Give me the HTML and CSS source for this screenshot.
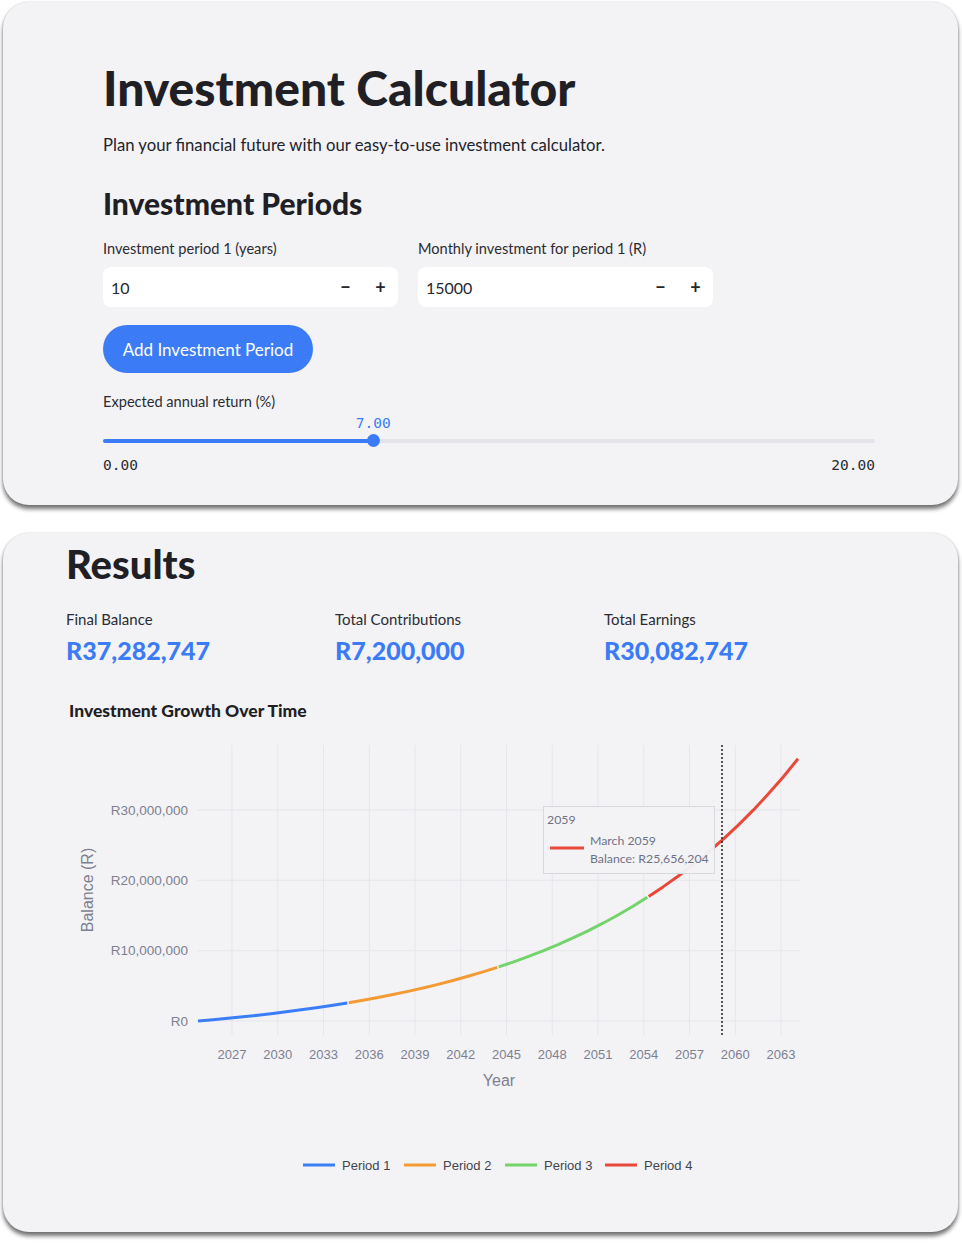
FILE: index.html
```html
<!DOCTYPE html>
<html lang="en">
<head>
<meta charset="utf-8">
<title>Investment Calculator</title>
<link rel="stylesheet" href="styles.css">
</head>
<body>
<section class="card card-input">
  <h1 class="title">Investment Calculator</h1>
  <p class="subtitle">Plan your financial future with our easy-to-use investment calculator.</p>
  <h2 class="section-title">Investment Periods</h2>
  <div class="fields">
    <div class="field">
      <div class="field-label">Investment period 1 (years)</div>
      <div class="number-input">
        <span class="number-value">10</span>
        <span class="step">&#8722;</span>
        <span class="step">+</span>
      </div>
    </div>
    <div class="field">
      <div class="field-label">Monthly investment for period 1 (R)</div>
      <div class="number-input">
        <span class="number-value">15000</span>
        <span class="step">&#8722;</span>
        <span class="step">+</span>
      </div>
    </div>
  </div>
  <button class="add-btn" type="button">Add Investment Period</button>
  <div class="slider-block">
    <div class="field-label">Expected annual return (%)</div>
    <div class="slider-value-row"><span class="slider-value" style="left: 35%">7.00</span></div>
    <div class="slider-track">
      <div class="slider-fill" style="width: 35%"></div>
      <div class="slider-thumb" style="left: 35%"></div>
    </div>
    <div class="slider-range"><span>0.00</span><span>20.00</span></div>
  </div>
</section>

<section class="card card-results">
  <h2 class="results-title">Results</h2>
  <div class="metrics">
    <div class="metric">
      <div class="metric-label">Final Balance</div>
      <div class="metric-value">R37,282,747</div>
    </div>
    <div class="metric">
      <div class="metric-label">Total Contributions</div>
      <div class="metric-value">R7,200,000</div>
    </div>
    <div class="metric">
      <div class="metric-label">Total Earnings</div>
      <div class="metric-value">R30,082,747</div>
    </div>
  </div>
  <h3 class="chart-title">Investment Growth Over Time</h3>
  <svg class="chart" width="880" height="460" viewBox="0 0 880 460">
    <g transform="translate(-66,-730)">
      <g class="grid">
        <line x1="232" y1="745" x2="232" y2="1035"/>
        <line x1="277.75" y1="745" x2="277.75" y2="1035"/>
        <line x1="323.5" y1="745" x2="323.5" y2="1035"/>
        <line x1="369.25" y1="745" x2="369.25" y2="1035"/>
        <line x1="415" y1="745" x2="415" y2="1035"/>
        <line x1="460.75" y1="745" x2="460.75" y2="1035"/>
        <line x1="506.5" y1="745" x2="506.5" y2="1035"/>
        <line x1="552.25" y1="745" x2="552.25" y2="1035"/>
        <line x1="598" y1="745" x2="598" y2="1035"/>
        <line x1="643.75" y1="745" x2="643.75" y2="1035"/>
        <line x1="689.5" y1="745" x2="689.5" y2="1035"/>
        <line x1="735.25" y1="745" x2="735.25" y2="1035"/>
        <line x1="781" y1="745" x2="781" y2="1035"/>
        <line x1="197" y1="810" x2="800" y2="810"/>
        <line x1="197" y1="880.3" x2="800" y2="880.3"/>
        <line x1="197" y1="950.7" x2="800" y2="950.7"/>
        <line x1="197" y1="1021" x2="800" y2="1021"/>
      </g>
      <g class="ytick">
        <text x="188" y="815">R30,000,000</text>
        <text x="188" y="885">R20,000,000</text>
        <text x="188" y="955">R10,000,000</text>
        <text x="188" y="1026">R0</text>
      </g>
      <g class="xtick">
        <text x="232" y="1059">2027</text>
        <text x="277.75" y="1059">2030</text>
        <text x="323.5" y="1059">2033</text>
        <text x="369.25" y="1059">2036</text>
        <text x="415" y="1059">2039</text>
        <text x="460.75" y="1059">2042</text>
        <text x="506.5" y="1059">2045</text>
        <text x="552.25" y="1059">2048</text>
        <text x="598" y="1059">2051</text>
        <text x="643.75" y="1059">2054</text>
        <text x="689.5" y="1059">2057</text>
        <text x="735.25" y="1059">2060</text>
        <text x="781" y="1059">2063</text>
      </g>
      <text class="axis-title" x="499" y="1086">Year</text>
      <text class="axis-title" x="0" y="0" transform="translate(93,890) rotate(-90)">Balance (R)</text>
      <g class="curve">
        <polyline class="p1" points="198,1021 213,1019.7 228,1018.3 243,1016.8 258,1015.2 273,1013.4 288,1011.6 303,1009.6 318,1007.5 333,1005.3 347.3,1003"/>
        <polyline class="p2" points="348.7,1002.7 363,1000.3 378,997.5 393,994.5 408,991.4 423,988.0 438,984.4 453,980.5 468,976.3 483,971.9 497.3,967.4"/>
        <polyline class="p3" points="498.7,966.9 513,962.1 528,956.6 543,950.8 558,944.6 573,937.9 588,930.8 603,923.2 618,915.0 633,906.3 647.3,897.3"/>
        <polyline class="p4" points="648.7,896.5 663,886.9 678,876.2 693,864.8 708,852.5 723,839.4 738,825.4 753,810.4 768,794.3 783,777.2 798,758.8"/>
      </g>
      <line class="spike" x1="722" y1="745" x2="722" y2="1035"/>
      <g class="tooltip">
        <rect x="543.5" y="806.5" width="171" height="67"/>
        <text class="tt-year" x="547" y="824">2059</text>
        <line x1="550" y1="848" x2="584" y2="848"/>
        <text class="tt-text" x="590" y="845">March 2059</text>
        <text class="tt-text" x="590" y="863">Balance: R25,656,204</text>
      </g>
      <g class="legend">
        <line class="p1" x1="303" y1="1165" x2="335" y2="1165"/>
        <text x="342" y="1170">Period 1</text>
        <line class="p2" x1="404" y1="1165" x2="436" y2="1165"/>
        <text x="443" y="1170">Period 2</text>
        <line class="p3" x1="505" y1="1165" x2="537" y2="1165"/>
        <text x="544" y="1170">Period 3</text>
        <line class="p4" x1="605" y1="1165" x2="637" y2="1165"/>
        <text x="644" y="1170">Period 4</text>
      </g>
    </g>
  </svg>
</section>
</body>
</html>
```

FILE: styles.css
```css
* { box-sizing: border-box; }

body {
  margin: 0;
  padding: 2px 4px 12px 3px;
  background: #ffffff;
  font-family: Lato, "Noto Sans", "Open Sans", sans-serif;
  color: #24242b;
}

.card {
  background: #f3f3f6;
  border-radius: 26px;
  box-shadow: 0 4px 4px rgba(0, 0, 0, 0.55), 0 0 2px rgba(0, 0, 0, 0.2);
}

.card-input {
  padding: 60px 83px 32px 100px;
  height: 503px;
}

.title {
  margin: 0;
  font-size: 48px;
  line-height: 52px;
  font-weight: 900;
  color: #1f1f25;
}

.subtitle {
  margin: 19px 0 0;
  font-size: 16.7px;
  line-height: 24px;
}

.section-title {
  margin: 28px 0 0;
  font-size: 30px;
  line-height: 36px;
  font-weight: 900;
  color: #1f1f25;
}

.fields {
  margin-top: 18px;
  display: grid;
  grid-template-columns: 295px 295px;
  gap: 20px;
}

.field-label {
  font-size: 14.6px;
  line-height: 20px;
  color: #2b2c33;
}

.number-input {
  margin-top: 8px;
  height: 40px;
  background: #ffffff;
  border-radius: 8px;
  display: flex;
  align-items: center;
  padding: 0 0 0 8px;
}

.number-value {
  flex: 1;
  font-size: 16px;
  color: #26272d;
}

.step {
  width: 35px;
  text-align: center;
  font-size: 18px;
  font-weight: 700;
  color: #26272d;
}

.add-btn {
  margin-top: 18px;
  width: 210px;
  height: 48px;
  border: none;
  border-radius: 24px;
  background: #3b7cf6;
  color: #ffffff;
  font-family: inherit;
  font-size: 17px;
  padding: 0;
}

.slider-block {
  margin-top: 19px;
}

.slider-value-row {
  position: relative;
  height: 16px;
  margin-top: 3px;
}

.slider-value {
  position: absolute;
  top: 0;
  transform: translateX(-50%);
  font-family: "DejaVu Sans Mono", "Liberation Mono", monospace;
  font-size: 14.5px;
  line-height: 16px;
  color: #3b7cf6;
}

.slider-track {
  position: relative;
  margin-top: 8px;
  height: 4px;
  border-radius: 2px;
  background: #e3e3e9;
}

.slider-fill {
  height: 4px;
  border-radius: 2px;
  background: #3b7cf6;
}

.slider-thumb {
  position: absolute;
  top: -5px;
  width: 13px;
  height: 13px;
  margin-left: -6.5px;
  border-radius: 50%;
  background: #3b7cf6;
}

.slider-range {
  margin-top: 14px;
  display: flex;
  justify-content: space-between;
  font-family: "DejaVu Sans Mono", "Liberation Mono", monospace;
  font-size: 14.5px;
  line-height: 16px;
  color: #2b2c33;
}

.card-results {
  margin-top: 28px;
  padding: 9px 40px 42px 63px;
}

.results-title {
  margin: 0;
  font-size: 40px;
  line-height: 44px;
  font-weight: 900;
  color: #1f1f25;
}

.metrics {
  margin-top: 23px;
  display: grid;
  grid-template-columns: 269px 269px 269px;
}

.metric-label {
  font-size: 15px;
  line-height: 20px;
  color: #2b2c33;
}

.metric-value {
  margin-top: 6px;
  font-size: 25px;
  line-height: 30px;
  font-weight: 900;
  color: #3b7cf6;
}

.chart-title {
  margin: 35px 0 0 3px;
  font-size: 17.5px;
  line-height: 22px;
  font-weight: 900;
  color: #1f1f25;
}

.chart {
  display: block;
  margin-top: 8px;
  overflow: visible;
}

.grid line {
  stroke: #e5e5eb;
  stroke-width: 1;
}

.ytick text {
  font-family: "Liberation Sans", Arial, sans-serif;
  font-size: 13.5px;
  fill: #7d8091;
  text-anchor: end;
}

.xtick text {
  font-family: "Liberation Sans", Arial, sans-serif;
  font-size: 13px;
  fill: #7d8091;
  text-anchor: middle;
}

.axis-title {
  font-family: "Liberation Sans", Arial, sans-serif;
  font-size: 16px;
  fill: #7d8091;
  text-anchor: middle;
}

.curve polyline {
  fill: none;
  stroke-width: 3;
  stroke-linejoin: round;
}

.p1 { stroke: #3a7ef7; }
.p2 { stroke: #f49a35; }
.p3 { stroke: #72d46b; }
.p4 { stroke: #e9493a; }

.spike {
  stroke: #222222;
  stroke-width: 1.5;
  stroke-dasharray: 2 2;
}

.tooltip rect {
  fill: #f3f3f6;
  fill-opacity: 0.96;
  stroke: #d7d7dd;
  stroke-width: 1;
}

.tooltip line {
  stroke: #e9493a;
  stroke-width: 3;
}

.tt-year,
.tt-text {
  font-family: Lato, "Noto Sans", sans-serif;
  font-size: 12.3px;
  fill: #6f7285;
}

.legend line {
  stroke-width: 3;
}

.legend text {
  font-family: "Liberation Sans", Arial, sans-serif;
  font-size: 13px;
  fill: #44454d;
}
```
